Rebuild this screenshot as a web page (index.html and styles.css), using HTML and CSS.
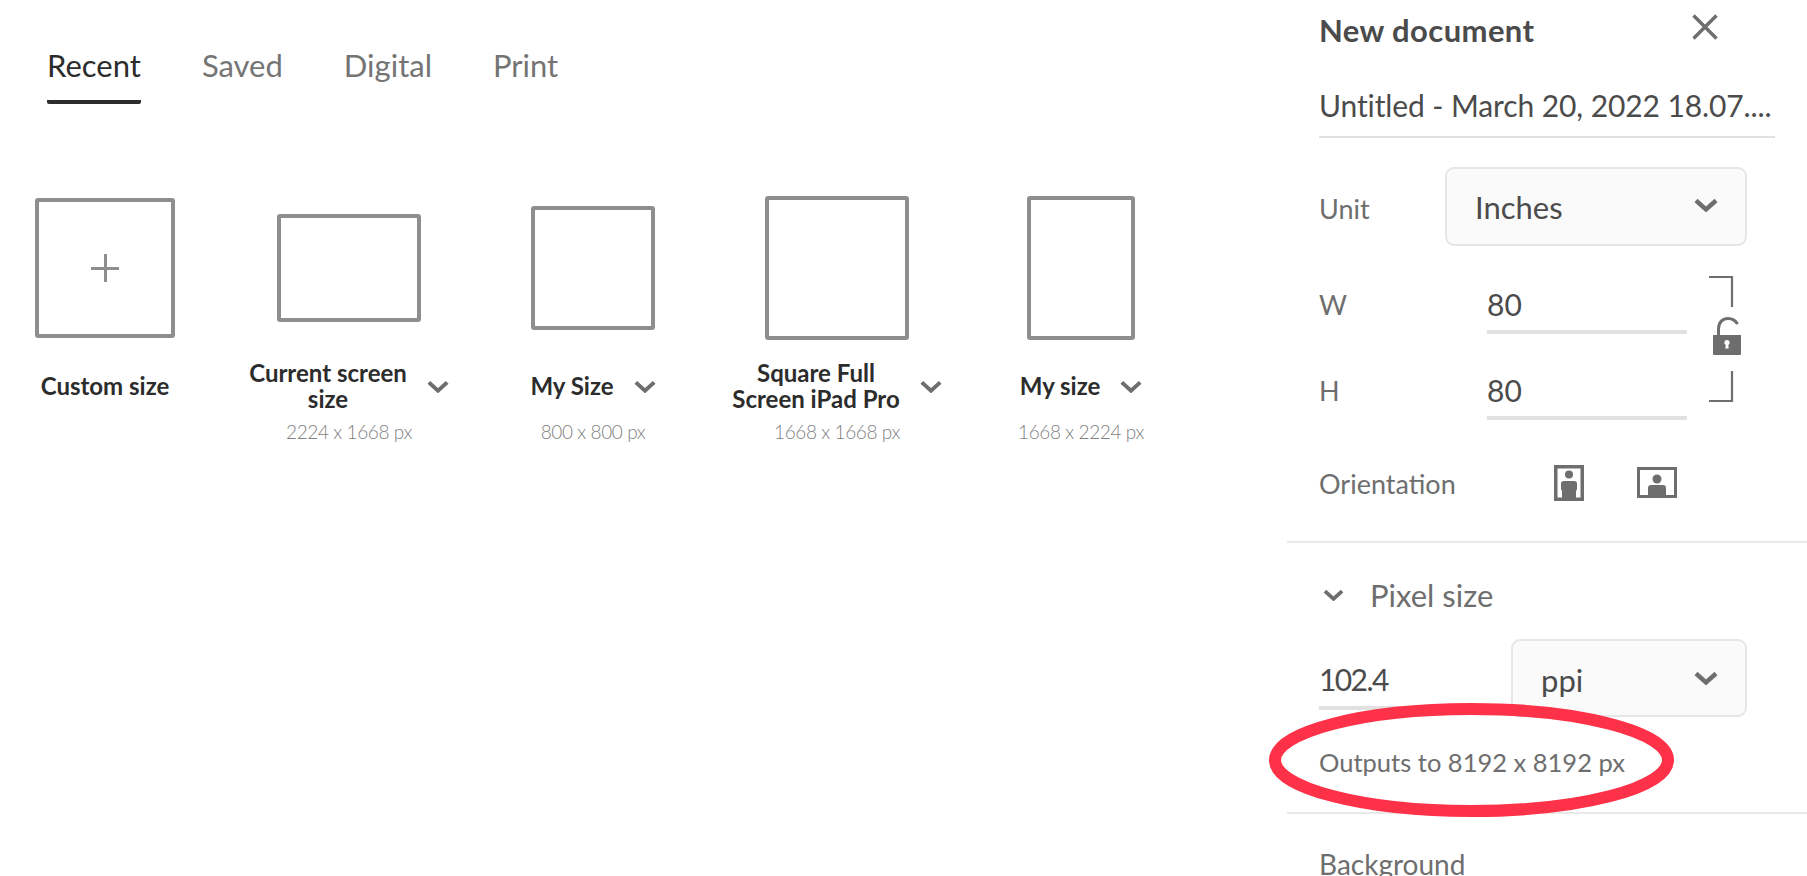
FILE: index.html
```html
<!DOCTYPE html>
<html lang="en">
<head>
<meta charset="UTF-8">
<meta name="viewport" content="width=device-width, initial-scale=1.0">
<title>New document</title>
<link rel="stylesheet" href="styles.css">
</head>
<body>
<svg class="sprite" aria-hidden="true">
    <symbol id="chevron" viewBox="0 0 24 14">
        <path d="M2 2.5 L12 11.5 L22 2.5" fill="none" stroke="currentColor" stroke-width="4.4"/>
    </symbol>
</svg>

<main class="presets">
    <nav class="tabs">
        <a class="tab active">Recent</a>
        <a class="tab">Saved</a>
        <a class="tab">Digital</a>
        <a class="tab">Print</a>
    </nav>
    <div class="cards">
        <div class="card">
            <div class="thumb-area"><div class="thumb thumb-custom"><span class="plus"></span></div></div>
            <div class="card-label"><span>Custom size</span></div>
        </div>
        <div class="card">
            <div class="thumb-area"><div class="thumb thumb-screen"></div></div>
            <div class="card-label"><span>Current screen<br>size</span><svg class="chevron"><use href="#chevron"/></svg></div>
            <div class="card-size">2224 x 1668 px</div>
        </div>
        <div class="card">
            <div class="thumb-area"><div class="thumb thumb-mysize"></div></div>
            <div class="card-label"><span>My Size</span><svg class="chevron"><use href="#chevron"/></svg></div>
            <div class="card-size">800 x 800 px</div>
        </div>
        <div class="card">
            <div class="thumb-area"><div class="thumb thumb-square"></div></div>
            <div class="card-label"><span>Square Full<br>Screen iPad Pro</span><svg class="chevron"><use href="#chevron"/></svg></div>
            <div class="card-size">1668 x 1668 px</div>
        </div>
        <div class="card">
            <div class="thumb-area"><div class="thumb thumb-tall"></div></div>
            <div class="card-label"><span>My size</span><svg class="chevron"><use href="#chevron"/></svg></div>
            <div class="card-size">1668 x 2224 px</div>
        </div>
    </div>
</main>

<aside class="panel">
    <section class="section">
        <div class="panel-head">
            <h1>New document</h1>
            <svg class="close" viewBox="0 0 26 26"><path d="M1.5 1.5 L24.5 24.5 M24.5 1.5 L1.5 24.5" fill="none" stroke="currentColor" stroke-width="3.4"/></svg>
        </div>
        <div class="doc-name">Untitled - March 20, 2022 18.07....</div>
        <div class="unit-row">
            <span class="field-label unit-label">Unit</span>
            <div class="select select-unit">
                <span>Inches</span>
                <svg class="select-chevron"><use href="#chevron"/></svg>
            </div>
        </div>
        <div class="dims">
            <div class="dim-rows">
                <div class="dim-row">
                    <span class="field-label dim-label">W</span>
                    <span class="dim-input">80</span>
                </div>
                <div class="dim-row">
                    <span class="field-label dim-label">H</span>
                    <span class="dim-input">80</span>
                </div>
            </div>
            <svg class="link" viewBox="0 0 36 128">
                <path d="M1 2 H24 V32 M24 96 V126 H1" fill="none" stroke="#6e6e6e" stroke-width="2.2"/>
                <path d="M10.5 62 V54 C10.5 47 15 43.5 20 43.5 C24 43.5 27.5 45.5 29.5 49" fill="none" stroke="#6e6e6e" stroke-width="3"/>
                <path fill-rule="evenodd" fill="#6e6e6e" d="M5 60 H33 V79 Q33 80 32 80 H6 Q5 80 5 79 Z M19 65 A2.6 2.6 0 0 0 17.7 69.9 L17.3 73.5 H20.7 L20.3 69.9 A2.6 2.6 0 0 0 19 65 Z"/>
            </svg>
        </div>
        <div class="orient-row">
            <span class="field-label">Orientation</span>
            <svg class="orient-portrait" viewBox="0 0 30 36">
                <path fill-rule="evenodd" fill="#6e6e6e" d="M0 0 H30 V36 H0 Z M3.5 3.5 V32.5 H8 V26 Q7 25 7 23.5 V18.5 Q7 16 10 16 H20 Q23 16 23 18.5 V23.5 Q23 25 22 26 V32.5 H26.5 V3.5 Z"/>
                <circle cx="15" cy="9.5" r="4" fill="#6e6e6e"/>
            </svg>
            <svg class="orient-landscape" viewBox="0 0 40 31">
                <path fill-rule="evenodd" fill="#6e6e6e" d="M0 0 H40 V31 H0 Z M3 3 V28 H11 V21 Q11 18 14 18 H26 Q29 18 29 21 V28 H37 V3 Z"/>
                <circle cx="20" cy="12" r="4.5" fill="#6e6e6e"/>
            </svg>
        </div>
    </section>

    <section class="section">
        <div class="pixel-head">
            <svg class="pixel-chevron"><use href="#chevron"/></svg>
            <span class="pixel-title">Pixel size</span>
        </div>
        <div class="ppi-row">
            <span class="ppi-input">102.4</span>
            <div class="select select-ppi">
                <span>ppi</span>
                <svg class="select-chevron"><use href="#chevron"/></svg>
            </div>
        </div>
        <div class="outputs">Outputs to 8192 x 8192 px</div>
    </section>

    <section class="section-last">
        <span class="field-label bg-label">Background</span>
    </section>
</aside>

<!-- red marker drawn on top of the screenshot -->
<svg class="marker" viewBox="0 0 405 114">
    <ellipse cx="202.5" cy="57" rx="196.5" ry="51" fill="none" stroke="#fd3147" stroke-width="12"/>
</svg>
</body>
</html>
```

FILE: styles.css
```css
body {
    font-family: 'Lato', 'Open Sans', sans-serif;
    background-color: #fff;
    color: #4b4b4b;
    margin: 0;
    width: 1807px;
    height: 876px;
    overflow: hidden;
    display: flex;
    position: relative;
}

.sprite {
    display: none;
}

/* left side */
.presets {
    flex: 1;
    padding-left: 4px;
}

.tabs {
    display: flex;
    gap: 61px;
    padding: 46px 0 0 43px;
    height: 58px;
}

.tab {
    font-size: 31px;
    line-height: 38px;
    height: 54px;
    color: #747474;
    font-weight: 400;
}

.tab.active {
    color: #2c2c2c;
    border-bottom: 4px solid #2c2c2c;
    border-radius: 2px;
}

.cards {
    display: grid;
    grid-template-columns: repeat(5, 202px);
    gap: 42px;
    padding-top: 92px;
}

.card {
    display: flex;
    flex-direction: column;
    align-items: center;
}

.thumb-area {
    height: 144px;
    display: flex;
    align-items: center;
}

.thumb {
    box-sizing: border-box;
    border: 4px solid #8e8e8e;
    border-radius: 3px;
    display: flex;
    justify-content: center;
    align-items: center;
}

.thumb-custom { width: 140px; height: 140px; }
.thumb-screen { width: 144px; height: 108px; }
.thumb-mysize { width: 124px; height: 124px; }
.thumb-square { width: 144px; height: 144px; }
.thumb-tall { width: 108px; height: 144px; }

.plus {
    width: 28px;
    height: 28px;
    background:
        linear-gradient(#8e8e8e, #8e8e8e) center / 100% 3px no-repeat,
        linear-gradient(#8e8e8e, #8e8e8e) center / 3px 100% no-repeat;
}

.card-label {
    display: flex;
    align-items: center;
    justify-content: center;
    gap: 20px;
    height: 52px;
    margin-top: 20px;
    font-size: 24px;
    line-height: 26px;
    font-weight: 700;
    color: #2c2c2c;
    text-align: center;
    white-space: nowrap;
}

.chevron {
    width: 22px;
    height: 13px;
    color: #6e6e6e;
    flex: none;
}

.card-size {
    margin-top: 8px;
    font-size: 19px;
    line-height: 24px;
    letter-spacing: -0.4px;
    font-weight: 300;
    color: #808080;
}

/* right panel */
.panel {
    width: 520px;
    flex: none;
}

.section {
    padding-left: 32px;
    border-bottom: 2px solid #e9e9e9;
}

.section-last {
    padding: 33px 0 0 32px;
}

.panel-head {
    height: 62px;
    display: flex;
    align-items: center;
    justify-content: space-between;
    padding-right: 89px;
}

h1 {
    margin: 0 0 2px;
    font-size: 31px;
    font-weight: 700;
    line-height: 36px;
    letter-spacing: 0.4px;
    color: #4b4b4b;
}

.close {
    width: 26px;
    height: 26px;
    color: #6e6e6e;
    margin-top: -8px;
}

.doc-name {
    width: 456px;
    height: 76px;
    box-sizing: border-box;
    padding-top: 25px;
    font-size: 30px;
    line-height: 36px;
    letter-spacing: -0.1px;
    white-space: nowrap;
    border-bottom: 2px solid #e1e1e1;
}

.field-label {
    font-size: 27px;
    line-height: 34px;
    color: #6e6e6e;
}

.bg-label {
    font-size: 28px;
}

.unit-row {
    display: flex;
    align-items: center;
    margin: 29px 0 2px;
}

.unit-label {
    width: 126px;
    padding-top: 4px;
}

.select {
    box-sizing: border-box;
    background: #fafafa;
    border: 2px solid #e6e6e6;
    border-radius: 9px;
    display: flex;
    align-items: center;
    justify-content: space-between;
    font-size: 31px;
    line-height: 36px;
    color: #4b4b4b;
    padding: 0 27px 0 28px;
}

.select-unit {
    width: 302px;
    height: 79px;
}

.select-ppi {
    width: 236px;
    height: 78px;
    padding-top: 4px;
}

.select-chevron {
    width: 24px;
    height: 14px;
    color: #6e6e6e;
    margin-bottom: 4px;
}

.dims {
    display: flex;
    align-items: flex-start;
}

.dim-rows {
    width: 368px;
}

.dim-row {
    display: flex;
    align-items: flex-end;
    height: 86px;
}

.dim-label {
    width: 168px;
    padding-bottom: 12px;
}

.dim-input {
    box-sizing: border-box;
    width: 200px;
    height: 50px;
    padding-top: 2px;
    font-size: 30px;
    line-height: 36px;
    border-bottom: 4px solid #e1e1e1;
}

.link {
    width: 36px;
    height: 128px;
    margin: 27px 0 0 21px;
}

.orient-row {
    box-sizing: border-box;
    display: flex;
    align-items: center;
    height: 121px;
    padding-top: 4px;
}

.orient-row .field-label {
    width: 235px;
    padding-top: 2px;
}

.orient-portrait {
    width: 30px;
    height: 36px;
    margin-right: 53px;
}

.orient-landscape {
    width: 40px;
    height: 31px;
}

.pixel-head {
    box-sizing: border-box;
    display: flex;
    align-items: center;
    gap: 26px;
    height: 96px;
    padding: 8px 0 0 4px;
}

.pixel-chevron {
    width: 21px;
    height: 12px;
    color: #6e6e6e;
}

.pixel-title {
    font-size: 31px;
    line-height: 34px;
    font-weight: 400;
    color: #6e6e6e;
}

.ppi-row {
    display: flex;
    align-items: flex-start;
}

.ppi-input {
    box-sizing: border-box;
    width: 171px;
    height: 71px;
    margin-right: 21px;
    padding-top: 22px;
    font-size: 30px;
    line-height: 36px;
    letter-spacing: -1.6px;
    border-bottom: 4px solid #e1e1e1;
}

.outputs {
    padding-top: 28px;
    height: 67px;
    font-size: 25.5px;
    line-height: 34px;
    color: #6e6e6e;
}

.marker {
    position: absolute;
    left: 1269px;
    top: 703px;
    width: 405px;
    height: 114px;
}
```
